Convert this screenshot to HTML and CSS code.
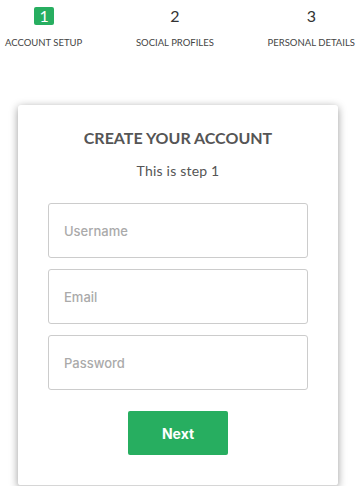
FILE: index.html
```html
<!DOCTYPE html>
<html lang="en">
<head>
    <meta charset="UTF-8">
    <meta name="viewport" content="width=device-width, initial-scale=1.0">
    <title>Create your account</title>
    <link rel="stylesheet" href="styles.css">
</head>
<body>
    <ul class="steps">
        <li class="step active">
            <span class="step-num">1</span>
            <span class="step-label">Account Setup</span>
        </li>
        <li class="step">
            <span class="step-num">2</span>
            <span class="step-label">Social Profiles</span>
        </li>
        <li class="step">
            <span class="step-num">3</span>
            <span class="step-label">Personal Details</span>
        </li>
    </ul>

    <form class="card">
        <h2 class="card-title">Create your account</h2>
        <p class="card-sub">This is step 1</p>
        <input class="field" type="text" placeholder="Username">
        <input class="field" type="text" placeholder="Email">
        <input class="field field-last" type="password" placeholder="Password">
        <button class="next-btn" type="button">Next</button>
    </form>
</body>
</html>
```

FILE: styles.css
```css
body {
    margin: 0;
    background-color: #ffffff;
    font-family: 'Lato', 'Open Sans', sans-serif;
    color: #555;
}

.steps {
    list-style: none;
    margin: 0;
    padding: 7px 7px 0 5px;
    display: flex;
    justify-content: space-between;
}

.step {
    display: flex;
    flex-direction: column;
    align-items: center;
}

.step-num {
    height: 18px;
    line-height: 18px;
    font-size: 16px;
    color: #333;
    padding: 0 6px;
}

.step.active .step-num {
    background-color: #27ae60;
    color: #fff;
    border-radius: 2px;
    width: 20px;
    box-sizing: border-box;
    text-align: center;
}

.step-label {
    margin-top: 12px;
    line-height: 12px;
    font-size: 9.5px;
    text-transform: uppercase;
    color: #444;
}

.card {
    width: 320px;
    box-sizing: border-box;
    margin: 56px 0 0 18px;
    padding: 23px 30px 30px;
    background-color: #fff;
    border-radius: 3px;
    border-bottom: 1px solid #d6d6d6;
    box-shadow: 0 2px 8px rgba(0, 0, 0, 0.4);
    display: flex;
    flex-direction: column;
    align-items: center;
}

.card-title {
    margin: 0;
    font-size: 16px;
    line-height: 20px;
    font-weight: 700;
    text-transform: uppercase;
    color: #555;
}

.card-sub {
    margin: 14px 0 24px;
    font-size: 14px;
    line-height: 17px;
    letter-spacing: 0.2px;
    color: #555;
}

.field {
    width: 100%;
    height: 55px;
    flex-shrink: 0;
    box-sizing: border-box;
    margin: 0 0 11px;
    padding: 0 15px;
    border: 1px solid #ccc;
    border-radius: 3px;
    font-family: 'Inter', sans-serif;
    font-size: 13px;
    font-weight: 500;
    color: #333;
}

.field::placeholder {
    color: #aaa;
}

.field-last {
    margin-bottom: 21px;
}

.next-btn {
    width: 100px;
    height: 44px;
    flex-shrink: 0;
    border: none;
    border-radius: 2px;
    background-color: #27ae60;
    color: #fff;
    font-family: 'Inter', sans-serif;
    font-size: 14px;
    font-weight: 700;
    cursor: pointer;
}
```
